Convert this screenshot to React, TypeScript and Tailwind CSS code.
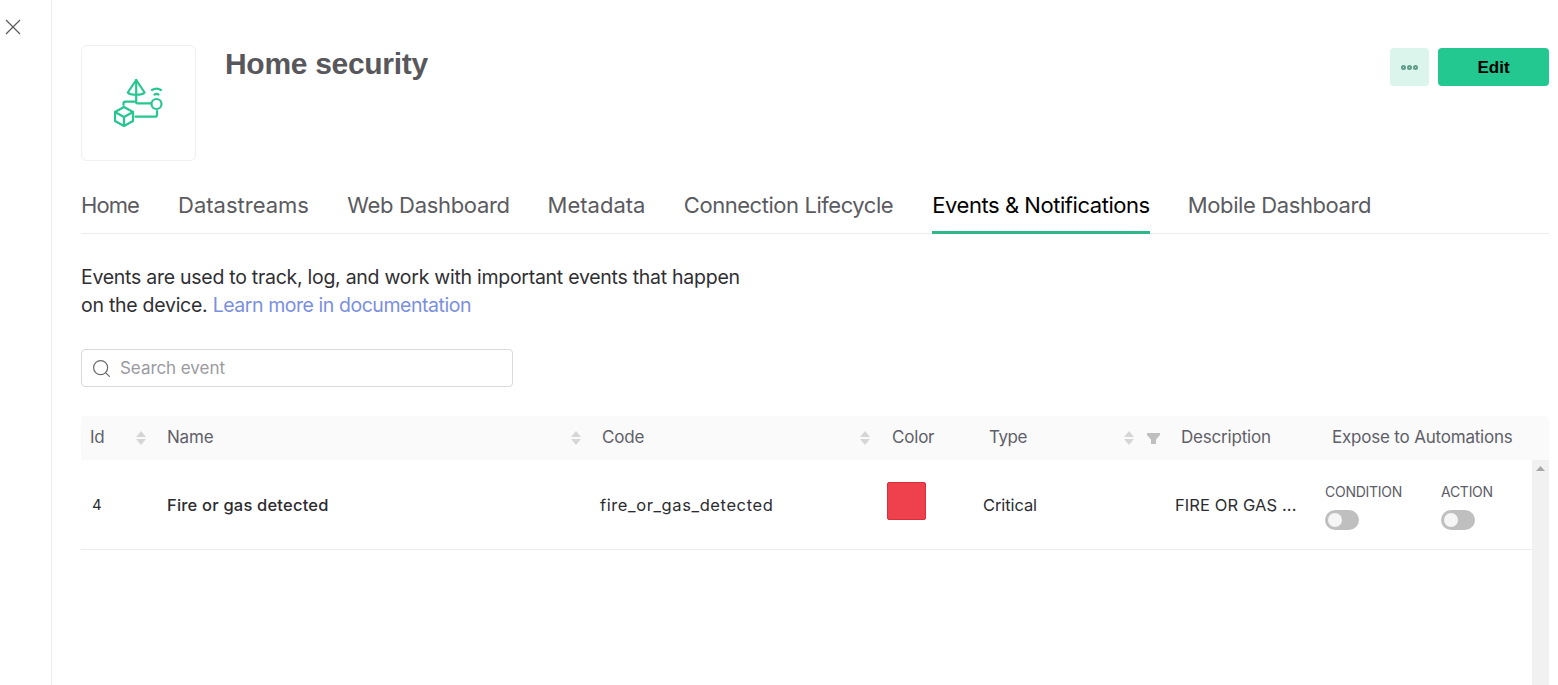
import { Search } from "lucide-react";

const FONT = "font-['Inter','Liberation_Sans',sans-serif]";
const TABS = [
  { label: "Home", cls: "w-[58px] tracking-[-0.9px]" },
  { label: "Datastreams", cls: "w-[131px] tracking-[0px]" },
  { label: "Web Dashboard", cls: "w-[161px] tracking-[-0.32px]" },
  { label: "Metadata", cls: "w-[97px] tracking-[0px]" },
  { label: "Connection Lifecycle", cls: "w-[209px] tracking-[-0.45px]" },
  { label: "Events & Notifications", cls: "w-[218px] tracking-[-0.45px]" },
  { label: "Mobile Dashboard", cls: "w-[183px] -ml-[1px] tracking-[-0.4px]" },
];

function SortIcon() {
  return (
    <svg width="10" height="14" viewBox="0 0 10 14" fill="#d6d6d6">
      <path d="M5 0 10 6H0z" />
      <path d="M5 14 0 8h10z" />
    </svg>
  );
}

function FilterIcon() {
  return (
    <svg width="13" height="11" viewBox="0 0 13 11" fill="#bfbfbf">
      <path d="M0 0h13v2L9 6.500V11H4V6.500L0 2z" />
    </svg>
  );
}

function ProductIcon() {
  return (
    <svg
      width="50"
      height="50"
      viewBox="0 0 50 50"
      fill="none"
      stroke="#26c78e"
      strokeWidth="2.200"
      strokeLinecap="round"
      strokeLinejoin="round"
    >
      {/* cone */}
      <path d="M22.200 2 13.800 14.500c2.500 3 14.300 3 16.800 0z" />
      <path d="M22.200 2v21.700" />
      {/* wires */}
      <path d="M9.500 27v-1.300c0-1.200.8-2 2-2H22c0 1 .6 1.600 1.600 1.600H37" />
      <path d="M21.500 38.700H41c1.200 0 2-.8 2-2V33" />
      {/* sensor + signal */}
      <circle cx="42.500" cy="26" r="5" />
      <path d="M38 12c3-1.800 6-1.800 9 0" />
      <path d="M40.500 16.500c1.300-.7 2.700-.7 4 0" />
      {/* cube */}
      <path d="m10 29 9 5v9l-9 5-9-5v-9z" />
      <path d="m1 34 9 5 9-5M10 39v9" />
    </svg>
  );
}

function Toggle({ label, className }: { label: string; className?: string }) {
  return (
    <div className={className}>
      <div className="text-[14px] leading-[18px] text-[#5c5c66] tracking-[-0.27px]">{label}</div>
      <div className="mt-[9px] w-[34px] h-[20px] rounded-full bg-[#bfbfbf] flex items-center pl-[3px]">
        <div className="w-[14px] h-[14px] rounded-full bg-[#f5f5f5]" />
      </div>
    </div>
  );
}

export default function App() {
  return (
    <div className={`${FONT} flex h-[685px] w-[1558px] overflow-hidden bg-white`}>
      <div className="w-[52px] shrink-0 border-r border-[#ececec] pt-[19px] pl-[5px]">
        <svg width="16" height="16" viewBox="0 0 16 16" fill="none" stroke="#595959" strokeWidth="1.200">
          <path d="m1 1 14 14M15 1 1 15" />
        </svg>
      </div>

      <div className="ml-[29px] w-[1468px] pt-[45px]">
        {/* header */}
        <div className="flex h-[116px]">
          <div className="w-[115px] h-[116px] rounded-[6px] border border-[#efefef] flex items-center justify-center">
            <ProductIcon />
          </div>
          <h1 className="ml-[29px] mt-[1px] text-[30px] leading-[36px] font-bold text-[#58575c] tracking-[-0.3px] font-['Liberation_Sans']">
            Home security
          </h1>
          <div className="ml-auto flex gap-[9px] pt-[3px]">
            <button className="w-[39px] h-[38px] rounded-[4px] bg-[#dcf5ec] flex items-center justify-center gap-[1px]">
              <span className="w-[5px] h-[5px] rounded-full border-2 border-[#5f9c8a]" />
              <span className="w-[5px] h-[5px] rounded-full border-2 border-[#5f9c8a]" />
              <span className="w-[5px] h-[5px] rounded-full border-2 border-[#5f9c8a]" />
            </button>
            <button className="w-[111px] h-[38px] pt-[1px] rounded-[4px] bg-[#23c890] text-[17px] font-bold text-black font-['Liberation_Sans']">
              Edit
            </button>
          </div>
        </div>

        {/* tabs */}
        <div className="mt-[24px] flex h-[49px] gap-[39px] border-b border-[#ececec] text-[22px]">
          {TABS.map((tab) => {
            const active = tab.label === "Events & Notifications";
            return (
              <div
                key={tab.label}
                className={`${tab.cls} h-[49px] whitespace-nowrap flex justify-center leading-[40px] ${
                  active ? "border-b-[3px] border-[#2fb78a] text-black" : "text-[#5b5b5f]"
                }`}
              >
                {tab.label}
              </div>
            );
          })}
        </div>

        <p className="mt-[29px] w-[680px] text-[19.500px] leading-[28px] text-[#2f2f33] tracking-[-0.27px]">
          Events are used to track, log, and work with important events that happen
          <br />
          on the device. <span className="text-[#7a8fdf] tracking-[-0.45px]">Learn more in documentation</span>
        </p>

        {/* search */}
        <div className="mt-[30px] flex h-[38px] w-[432px] items-center gap-[8px] rounded-[4px] border border-[#d9d9d9] pl-[9px]">
          <Search size={21} strokeWidth={1.400} className="text-[#6b6b6b]" />
          <span className="pt-[2px] text-[17px] text-[#9a9a9f] tracking-[-0.05px]">Search event</span>
        </div>

        {/* table */}
        <div className="mt-[29px]">
          <div className="flex h-[44px] items-center rounded-t-[4px] bg-[#fafafa] text-[17px] text-[#5f5f69] tracking-[-0.2px]">
            <div className="w-[77px] pl-[9px] pr-[12px] flex items-center justify-between">
              Id <SortIcon />
            </div>
            <div className="w-[435px] pl-[9px] pr-[12px] flex items-center justify-between">
              Name <SortIcon />
            </div>
            <div className="w-[290px] pl-[9px] pr-[13px] flex items-center justify-between">
              Code <SortIcon />
            </div>
            <div className="w-[97px] pl-[9px]">Color</div>
            <div className="w-[192px] pl-[9px] pr-[12px] flex items-center">
              <span className="mr-auto tracking-[-0.45px]">Type</span>
              <SortIcon />
              <span className="ml-[13px] flex">
                <FilterIcon />
              </span>
            </div>
            <div className="w-[151px] pl-[9px]">Description</div>
            <div className="flex-1 pl-[9px] whitespace-nowrap">Expose to Automations</div>
          </div>

          <div className="flex h-[225px]">
            <div className="flex-1">
              <div className="flex h-[90px] items-center border-b border-[#ececec] pt-[2px] text-[16.500px] text-[#2c2c30] tracking-[-0.1px]">
                <div className="w-[77px] pl-[11px] text-[15px]">4</div>
                <div className="w-[435px] pl-[9px] font-medium tracking-[0.2px]">Fire or gas detected</div>
                <div className="w-[290px] pl-[7px] tracking-[0.6px]">fire_or_gas_detected</div>
                <div className="w-[97px] pl-[4px]">
                  <div className="w-[39px] h-[38px] mb-[10px] rounded-[2px] border border-[#d92f3c] bg-[#ee414d]" />
                </div>
                <div className="w-[192px] pl-[3px]">Critical</div>
                <div className="w-[151px] pl-[3px] whitespace-nowrap tracking-[0.1px]">FIRE OR GAS ...</div>
                <div className="flex flex-1 pl-[2px] pt-[2px]">
                  <Toggle label="CONDITION" className="w-[116px]" />
                  <Toggle label="ACTION" />
                </div>
              </div>
            </div>
            <div className="w-[17px] shrink-0 bg-[#f1f1f1] flex justify-center pt-[6px]">
              <svg width="9" height="5" viewBox="0 0 9 5" fill="#a8a8a8">
                <path d="M4.500 0 9 5H0z" />
              </svg>
            </div>
          </div>
        </div>
      </div>
    </div>
  );
}
